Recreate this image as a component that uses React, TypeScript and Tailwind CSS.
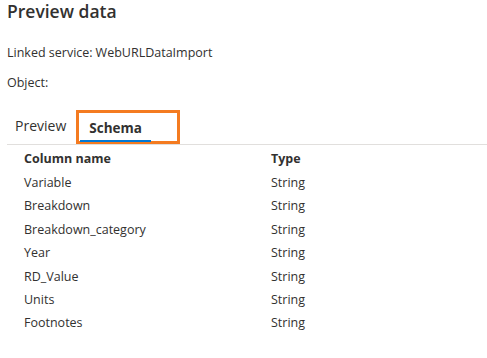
const rows = [
  "Variable",
  "Breakdown",
  "Breakdown_category",
  "Year",
  "RD_Value",
  "Units",
  "Footnotes",
];

export default function App() {
  return (
    <div
      className="h-[358px] w-[487px] overflow-hidden bg-white text-[#323130]"
      style={{ fontFamily: '"Open Sans", "Noto Sans", sans-serif' }}
    >
      <div className="pl-[7px]">
        <h1 className="text-[17.5px] font-semibold leading-[22px]">Preview data</h1>

        <div className="mt-[22px] flex items-center gap-[3px] text-[12.5px] leading-[18px]">
          <span>Linked service:</span>
          <span>WebURLDataImport</span>
        </div>
        <div className="mt-[12px] text-[12.5px] leading-[18px]">Object:</div>

        {/* Tabs */}
        <div className="mt-[18px] flex items-end border-b border-[#e1dfdd]">
          <div className="px-[8px] pb-[8px] text-[14px] leading-[20px]">Preview</div>
          <div className="relative ml-[2px] h-[34px] w-[104px] border-[3px] border-[#f47b20]">
            <div className="absolute left-[1px] top-[5px] px-[9px] text-[13.5px] font-bold leading-[20px]">
              Schema
            </div>
            <div className="absolute bottom-[-1px] left-[1px] h-[2px] w-[71px] bg-[#0078d4]" />
          </div>
        </div>

        {/* Schema table */}
        <div className="pl-[17px] pt-[1px] text-[12.5px]">
          <div className="grid grid-cols-[247px_1fr] font-bold leading-[25px]">
            <span>Column name</span>
            <span>Type</span>
          </div>
          {rows.map((r) => (
            <div key={r} className="grid grid-cols-[247px_1fr] leading-[23.4px]">
              <span>{r}</span>
              <span>String</span>
            </div>
          ))}
        </div>
      </div>
    </div>
  );
}
